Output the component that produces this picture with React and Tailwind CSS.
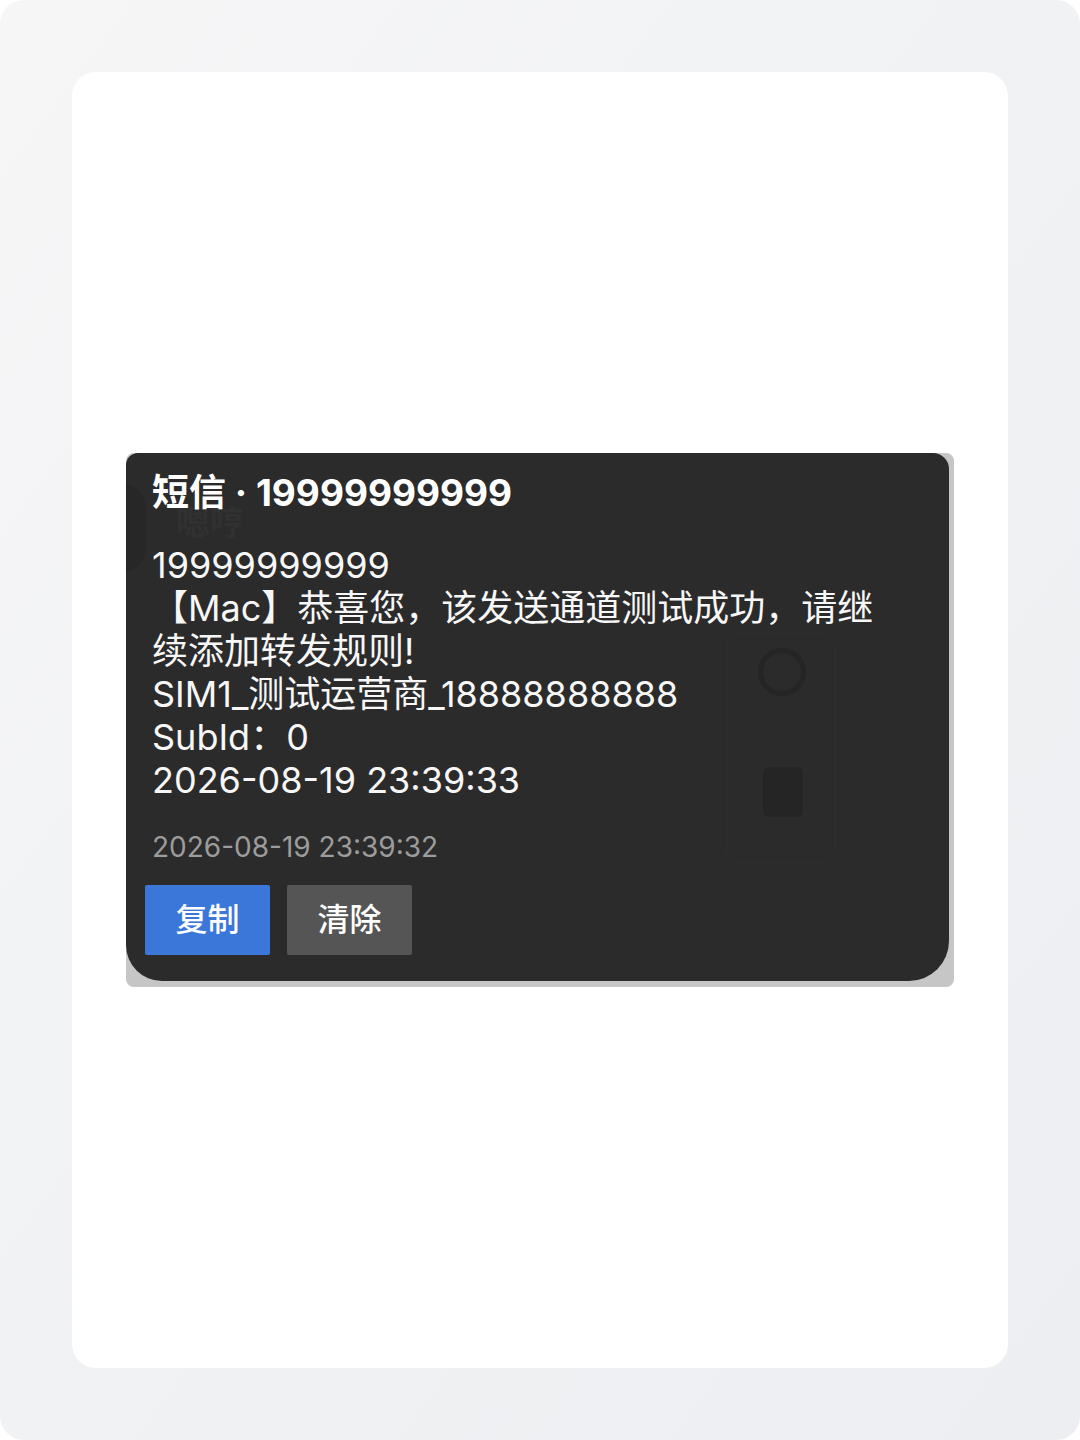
import React from "react";

const FONT = { fontFamily: 'Inter, "Noto Sans CJK SC", sans-serif' };

const lines = [
  "19999999999",
  "【Mac】恭喜您，该发送通道测试成功，请继续添加转发规则!",
  "SIM1_测试运营商_18888888888",
  "SubId：0",
  "2026-08-19 23:39:33",
];

const SmsCard = () => {
  return (
    <div className="w-[828px] rounded-[8px] bg-[#c6c6c6]">
      <div className="relative mr-[5px] mb-[6px] overflow-hidden rounded-tl-[12px] rounded-tr-[16px] rounded-bl-[36px] rounded-br-[40px] bg-[#2b2b2b] px-[19px] pt-[16px] pb-[26px]">
        {/* faint shapes left over from the window behind */}
        <div className="absolute left-[50px] top-[50px] text-[34px] font-bold leading-[40px] text-[#313131]">
          嗯哼
        </div>
        <div className="absolute left-[-30px] top-[30px] h-[90px] w-[50px] rounded-full bg-[#272727]" />
        <div className="absolute left-[600px] top-[180px] h-[230px] w-[110px] rounded-[14px] border-2 border-[#2d2d2d]" />
        <div className="absolute left-[632px] top-[195px] h-[48px] w-[48px] rounded-full border-[5px] border-[#252525]" />
        <div className="absolute left-[637px] top-[314px] h-[50px] w-[40px] rounded-[6px] bg-[#252525]" />

        <div className="relative px-[7px]">
          <div className="text-[37px] font-bold leading-[48px] text-white">
            短信 · 19999999999
          </div>
          <div className="mt-[27px] w-[734px] text-[36px] leading-[43px] text-[#f7f7f7]">
            {lines.map((line, i) => (
              <div key={`${i}.line`}>{line}</div>
            ))}
          </div>
          <div className="mt-[27px] text-[28px] leading-[36px] text-[#9c9c9c]">
            2026-08-19 23:39:32
          </div>
        </div>
        <div className="relative mt-[20px] flex gap-[17px]">
          <button className="flex h-[70px] w-[125px] items-center justify-center rounded-[2px] bg-[#3b76d9] text-[32px] font-medium text-white">
            复制
          </button>
          <button className="flex h-[70px] w-[125px] items-center justify-center rounded-[2px] bg-[#555555] text-[32px] font-medium text-white">
            清除
          </button>
        </div>
      </div>
    </div>
  );
};

const App = () => {
  return (
    <div className="h-[1440px] w-[1080px] bg-white" style={FONT}>
      <div className="flex h-full w-full rounded-[24px] bg-linear-to-br from-[#f6f6f7] to-[#eceef1] p-[72px]">
        <div className="flex flex-1 items-center justify-center rounded-[24px] bg-white">
          <SmsCard />
        </div>
      </div>
    </div>
  );
};

export default App;
